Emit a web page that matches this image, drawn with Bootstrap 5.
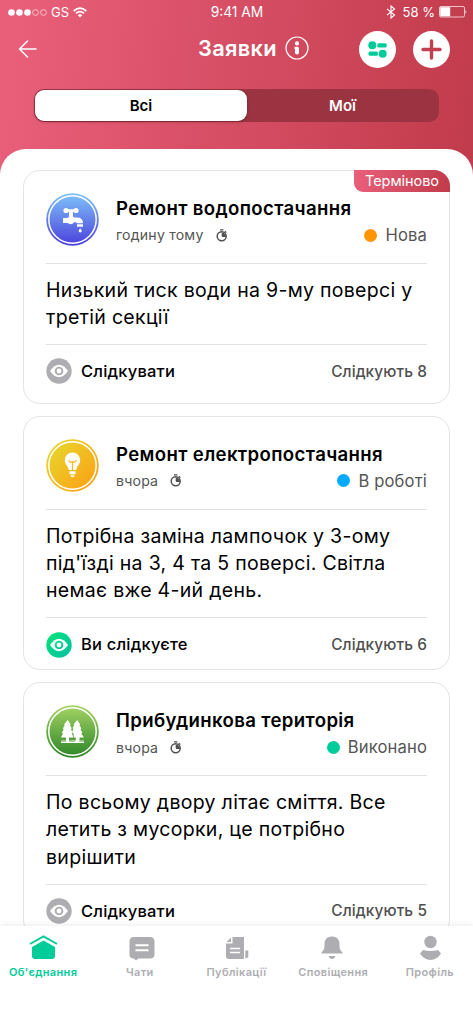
<!DOCTYPE html>
<html lang="uk">
<head>
<meta charset="utf-8">
<meta name="viewport" content="width=device-width, initial-scale=1">
<title>Заявки</title>
<link href="https://cdn.jsdelivr.net/npm/bootstrap@5.3.0/dist/css/bootstrap.min.css" rel="stylesheet">
<style>
body{font-family:Inter,"Noto Sans",sans-serif;color:#000;background:#fff}
svg{display:block;flex:none}
.screen{height:1024px;background:linear-gradient(97deg,#ea607b 0,#c03b4b 100%) 0 0/100% 180px no-repeat #fff}
.statusbar{height:24px;padding:0 6px 0 7px;font-size:13px;line-height:24px}
.statusbar>*{flex:1 1 0}
.clock{font-size:13.8px}
.topbar{height:51px;padding:0 23px 0 18px}
.back{width:180px}
.page-name{font-size:21.8px;font-weight:600;line-height:48px;letter-spacing:.3px}
.round-btn{width:37px;height:37px;padding:0;border:0;border-radius:50%;background:#fff}
.btn-gap{gap:17px}
.segments{margin:14px 34px 0;height:33px;padding:1px;border-radius:10px;background:#9b3341}
.segments .nav-link{padding:0;border-radius:9px;line-height:31px;font-size:15px;font-weight:600;color:#fff}
.segments .nav-link.active{flex:0 0 212px;background:#fff;color:#000;box-shadow:0 1px 3px #0004}
.sheet{margin-top:27px;padding:21px 23px 0;background:#fff;border-radius:26px 26px 0 0;min-height:0}
.request{border:1px solid #e3e3e8;border-radius:17px;padding:0 22px;margin-bottom:12px;background:#fff}
.req-head{height:93px;padding-top:22px;gap:17px;border-bottom:1px solid #e0e0e5}
.req-title{font-size:18.6px;font-weight:600;line-height:24px;margin:3px 0 0;white-space:nowrap;letter-spacing:.36px}
.req-meta{height:30px;color:#555}
.when{font-size:14.1px;letter-spacing:.2px}
.timer{margin-left:12px}
.state{font-size:16.6px;letter-spacing:.15px}
.dot{width:13px;height:13px;border-radius:50%}
.req-text{font-size:19.5px;line-height:27.3px;letter-spacing:.3px;padding:12.7px 0;margin:0;border-bottom:1px solid #e0e0e5;white-space:nowrap}
.req-foot{height:51px;padding-top:2px}
.follow{margin-left:9px;font-size:16.5px;font-weight:500;letter-spacing:.2px}
.count{font-size:15.4px;font-weight:500;letter-spacing:.1px;color:#505050}
.pinned .req-foot{height:58px;padding-bottom:5px;padding-top:0}
.urgent{top:-1px;right:-1px;width:96px;height:22px;line-height:22px;border-radius:0 16px 0 9px;background:linear-gradient(97deg,#ea607b,#c03b4b);font-size:14.5px;letter-spacing:-.05px}
.tabs{height:98px;background:#fff;box-shadow:0 -1px 6px #00000014;position:relative;padding-top:8px}
.tabs .nav-link{flex:0 0 96.7px;padding:0;color:#aeaeb2;font-size:11px;font-weight:600;line-height:16px;letter-spacing:.35px;text-align:center;white-space:nowrap}
.tabs .nav-link.active{color:#00cc99}
</style>
</head>
<body>
<svg width="0" height="0" class="position-absolute">
<defs>
<linearGradient id="blue" x1="0" y1="0" x2="0" y2="1"><stop stop-color="#7fc4fa"/><stop offset="1" stop-color="#4a3fdc"/></linearGradient>
<linearGradient id="gold" x1="0" y1="0" x2="1" y2="1"><stop stop-color="#e4dc30"/><stop offset="1" stop-color="#ff9b12"/></linearGradient>
<linearGradient id="green" x1="0" y1="0" x2="0" y2="1"><stop stop-color="#a6d566"/><stop offset="1" stop-color="#2b8426"/></linearGradient>
<linearGradient id="mint" x1="0" y1="0" x2="1" y2="1"><stop stop-color="#00e676"/><stop offset="1" stop-color="#00bfa5"/></linearGradient>
<symbol id="timer" viewBox="0 0 12 13"><circle cx="5.7" cy="7.3" r="4.5" fill="none" stroke="#505050" stroke-width="1.5"/><path d="M4 .3h3.4v1.2H4zM9.3 1.8l1.5 1.4-.9.9-1.5-1.3zM5.7 7.3V3.4l2 .5 2 2.2.3 1.9H6.3z" fill="#505050"/></symbol>
<symbol id="eye" viewBox="0 0 26 26"><circle cx="13" cy="13" r="12.700"/><path d="M4 13q9-12.500 18 0q-9 12.500-18 0z" fill="#fff"/><circle cx="13" cy="13" r="4.300"/><circle cx="13" cy="13" r="2.400" fill="#fff"/></symbol>
</defs>
</svg>
<div class="screen d-flex flex-column overflow-hidden">
<header>
<div class="statusbar d-flex align-items-center text-white">
<div class="d-flex align-items-center">
<svg width="42" height="12" fill="#fff"><circle cx="4.500" cy="6.500" r="3.300"/><circle cx="12.500" cy="6.500" r="3.300"/><circle cx="20.500" cy="6.500" r="3.300"/><g fill="none" stroke="#fff" stroke-width=".6"><circle cx="28.500" cy="6.500" r="2.900"/><circle cx="36.500" cy="6.500" r="2.900"/></g></svg>
<span style="margin-left:2px">GS</span>
<svg class="ms-1" width="14" height="11" viewBox="0 0 14 11" fill="none" stroke="#fff" stroke-width="1.700"><path d="M.7 4Q7-1.800 13.300 4M3 6.400q4-3.600 8 0"/><path d="M4.800 8.200q2.200-1.900 4.400 0L7 10.400z" fill="#fff" stroke="none"/></svg>
</div>
<div class="clock text-center">9:41 AM</div>
<div class="d-flex align-items-center justify-content-end">
<svg width="10" height="14" viewBox="0 0 10 14" fill="none" stroke="#fff" stroke-width="1.100"><path d="M1 3.800l7.500 6.200L5 13V1l3.500 3L1 10.200"/></svg>
<span class="me-1" style="margin-left:7px">58 %</span>
<svg width="28" height="12" viewBox="0 0 28 12"><rect x=".5" y=".5" width="25" height="10.500" rx="1.500" fill="none" stroke="#fff" stroke-width=".7"/><rect x="1.200" y="1.200" width="10" height="9.100" fill="#fff"/><path d="M26.500 3.800q1.500 2 0 4z" fill="#fff"/></svg>
</div>
</div>
<div class="topbar d-flex align-items-center text-white">
<div class="back pb-1"><svg width="20" height="20" viewBox="0 0 20 20" fill="none" stroke="#fff" stroke-width="1.500" stroke-linecap="round" stroke-linejoin="round"><path d="M18 11H1.500M9.500 3L1.500 11l8 8"/></svg></div>
<div class="d-flex align-items-center gap-2 pb-1">
<h1 class="page-name m-0">Заявки</h1>
<svg width="24" height="24" viewBox="0 0 24 24"><circle cx="12" cy="12" r="11" fill="none" stroke="#fff" stroke-width="1.200"/><circle cx="12" cy="7.400" r="2.100" fill="#fff"/><path d="M9.800 10.800h2.600q1.600 0 1.600 1.600v4.200a2 2 0 0 1-4 0v-3.400q-1.500-1.200-.2-2.400z" fill="#fff"/></svg>
</div>
<div class="d-flex ms-auto btn-gap">
<button class="round-btn d-flex align-items-center justify-content-center" aria-label="Фільтр"><svg width="19" height="17" viewBox="0 0 19 17" fill="#00cc99"><circle cx="4.300" cy="4.300" r="4"/><rect x="9.300" y="2.200" width="9.400" height="4.200" rx="1.500"/><rect x=".5" y="10.600" width="9.400" height="4.200" rx="1.500"/><circle cx="14.700" cy="12.700" r="4"/></svg></button>
<button class="round-btn d-flex align-items-center justify-content-center" aria-label="Додати"><svg width="21" height="21" viewBox="0 0 21 21" stroke="#c23f50" stroke-width="3.400" stroke-linecap="round"><path d="M10.500 2v17M2 10.500h17"/></svg></button>
</div>
</div>
<nav class="segments nav nav-pills nav-fill">
<a class="nav-item nav-link active">Всі</a><a class="nav-item nav-link">Мої</a>
</nav>
</header>
<main class="sheet flex-grow-1 overflow-hidden">
<article class="request pinned position-relative">
<span class="urgent position-absolute text-white text-center">Терміново</span>
<div class="req-head d-flex">
<svg width="53" height="53" viewBox="0 0 53 53"><circle cx="26.500" cy="26.500" r="26.300" fill="url(#blue)"/><circle cx="26.500" cy="26.500" r="23.700" fill="none" stroke="#fff" stroke-width="1.500"/><g fill="#fff"><circle cx="20" cy="17.500" r="2.600"/><circle cx="30" cy="17.500" r="2.600"/><path d="M20 16.200h10v2.800H20zM23 18.500h4v5.300q1 .7 2 .7h2q6 0 6 5.700h-6.200q0-.9-1.500-.9h-1q-3.300 3.300-6.800.7H17V25h4q1.300-.3 2-1.200zM31 31.300h6v2.400h-6z"/><path d="M34.200 35.200q3.200 4 0 4.200-3.200-.2 0-4.200z"/></g></svg>
<div class="flex-grow-1"><h2 class="req-title">Ремонт водопостачання</h2><div class="req-meta d-flex align-items-center"><span class="when">годину тому</span><svg class="timer" width="12" height="13"><use href="#timer"/></svg><span class="dot ms-auto" style="background:#ff9500"></span><span class="state ms-2">Нова</span></div></div>
</div>
<p class="req-text">Низький тиск води на 9-му поверсі у<br>третій секції</p>
<div class="req-foot d-flex align-items-center"><svg width="26" height="26" fill="#aeaeb2"><use href="#eye"/></svg><span class="follow">Слідкувати</span><span class="count ms-auto">Слідкують 8</span></div>
</article>
<article class="request">
<div class="req-head d-flex">
<svg width="53" height="53" viewBox="0 0 53 53"><circle cx="26.500" cy="26.500" r="26.300" fill="url(#gold)"/><circle cx="26.500" cy="26.500" r="23.700" fill="none" stroke="#fff" stroke-width="1.500"/><path d="M26.500 13.500a7.700 7.700 0 0 1 7.700 7.700c0 4-3.200 5.500-4 9.700h-7.400c-.8-4.200-4-5.700-4-9.700a7.700 7.700 0 0 1 7.700-7.700z" fill="#fff"/><path d="M22.800 21q.5 2.500 2 2.300l1.700-.8 1.700.8q1.500.2 2-2.300M26.500 22.500V31" fill="none" stroke="#f3ba22" stroke-width="1.200"/><path d="M23.400 32.300h6.200v2.900h-6.200zM24.200 36.200h4.600q-.5 2-2.300 2t-2.300-2z" fill="#fff"/></svg>
<div class="flex-grow-1"><h2 class="req-title">Ремонт електропостачання</h2><div class="req-meta d-flex align-items-center"><span class="when">вчора</span><svg class="timer" width="12" height="13"><use href="#timer"/></svg><span class="dot ms-auto" style="background:#00aaff"></span><span class="state ms-2">В роботі</span></div></div>
</div>
<p class="req-text">Потрібна заміна лампочок у 3-ому<br>під'їзді на 3, 4 та 5 поверсі. Світла<br>немає вже 4-ий день.</p>
<div class="req-foot d-flex align-items-center"><svg width="26" height="26" fill="url(#mint)"><use href="#eye"/></svg><span class="follow">Ви слідкуєте</span><span class="count ms-auto">Слідкують 6</span></div>
</article>
<article class="request">
<div class="req-head d-flex">
<svg width="53" height="53" viewBox="0 0 53 53"><circle cx="26.500" cy="26.500" r="26.300" fill="url(#green)"/><circle cx="26.500" cy="26.500" r="23.700" fill="none" stroke="#fff" stroke-width="1.500"/><path d="M21.700 15l3 4.500-.8.800 2 3.200-1 .8 2 3.500-1.200.7 2 3.900H23v3.200h4V38H15v-2.400h5v-3.200h-5l2-3.900-1.200-.7 2-3.500-1-.8 2-3.200-.8-.8z" fill="#fff"/><path d="M31.200 15l3 4.500-.8.800 2 3.200-1 .8 2 3.500-1.200.7 2.800 3.900h-4.500v3.200H38V38H26.500v-2.400h3.300v-3.200h-1.600l-1-4.300-1.200-1 1.500-3.300-1-.6 1.800-3.200-.7-.8z" fill="#fff"/><path d="M14.500 36.300h5.800M23 36.300h6M33 36.300h6" stroke="#43942f" stroke-width=".6"/></svg>
<div class="flex-grow-1"><h2 class="req-title">Прибудинкова територія</h2><div class="req-meta d-flex align-items-center"><span class="when">вчора</span><svg class="timer" width="12" height="13"><use href="#timer"/></svg><span class="dot ms-auto" style="background:#00cc99"></span><span class="state ms-2">Виконано</span></div></div>
</div>
<p class="req-text">По всьому двору літає сміття. Все<br>летить з мусорки, це потрібно<br>вирішити</p>
<div class="req-foot d-flex align-items-center"><svg width="26" height="26" fill="#aeaeb2"><use href="#eye"/></svg><span class="follow">Слідкувати</span><span class="count ms-auto">Слідкують 5</span></div>
</article>
</main>
<nav class="tabs nav flex-nowrap justify-content-center flex-shrink-0">
<a class="nav-link active"><svg class="mx-auto" width="30" height="30" viewBox="0 0 30 30"><path d="M2 10L15.500 2.500 29 10" fill="none" stroke="#00cc99" stroke-width="2"/><path d="M15.500 6.500L27 13v9q0 3-3 3H7q-3 0-3-3v-9z" fill="#00cc99"/></svg>Об'єднання</a>
<a class="nav-link"><svg class="mx-auto" width="30" height="30" viewBox="0 0 30 30" fill="#aeaeb2"><g transform="translate(1.500)"><path d="M7.500 3h16q4.500 0 4.500 4.500v13q0 4-4.500 4H12l-2.500 2-2.300-2Q3 24.500 3 20.500v-13Q3 3 7.500 3z"/><path d="M9 11.200h13M9 16.200h13" stroke="#fff" stroke-width="2"/></g></svg>Чати</a>
<a class="nav-link"><svg class="mx-auto" width="30" height="30" viewBox="0 0 30 30" fill="#aeaeb2"><path d="M10.500 3H22v22H7q-3 0-3-3V9.500h6.500zM4.500 8L9 3.500V8z"/><path d="M8 14.500h10M8 18.500h10" stroke="#fff" stroke-width="1.600"/><path d="M23.300 16.500h3v5.800q-.5 2.200-3 2.200z"/></svg>Публікації</a>
<a class="nav-link"><svg class="mx-auto" width="30" height="30" viewBox="0 0 30 30" fill="#aeaeb2"><path d="M14 2.500c6 0 7.500 4 7.500 8 0 4.500.5 5.500 3 8v1h-21v-1c2.500-2.500 3-3.500 3-8 0-4 1.500-8 7.500-8zM10.500 22h7q-1 3-3.500 3t-3.500-3z"/></svg>Сповіщення</a>
<a class="nav-link"><svg class="mx-auto" width="30" height="30" viewBox="0 0 30 30" fill="#aeaeb2"><circle cx="15.500" cy="8" r="6.200"/><path d="M8 16q7.500 2 15 0l3 3.500q-4 6.500-10.500 6.500T5 19.500z"/></svg>Профіль</a>
</nav>
</div>
<script src="https://cdn.jsdelivr.net/npm/bootstrap@5.3.0/dist/js/bootstrap.bundle.min.js"></script>
</body>
</html>
